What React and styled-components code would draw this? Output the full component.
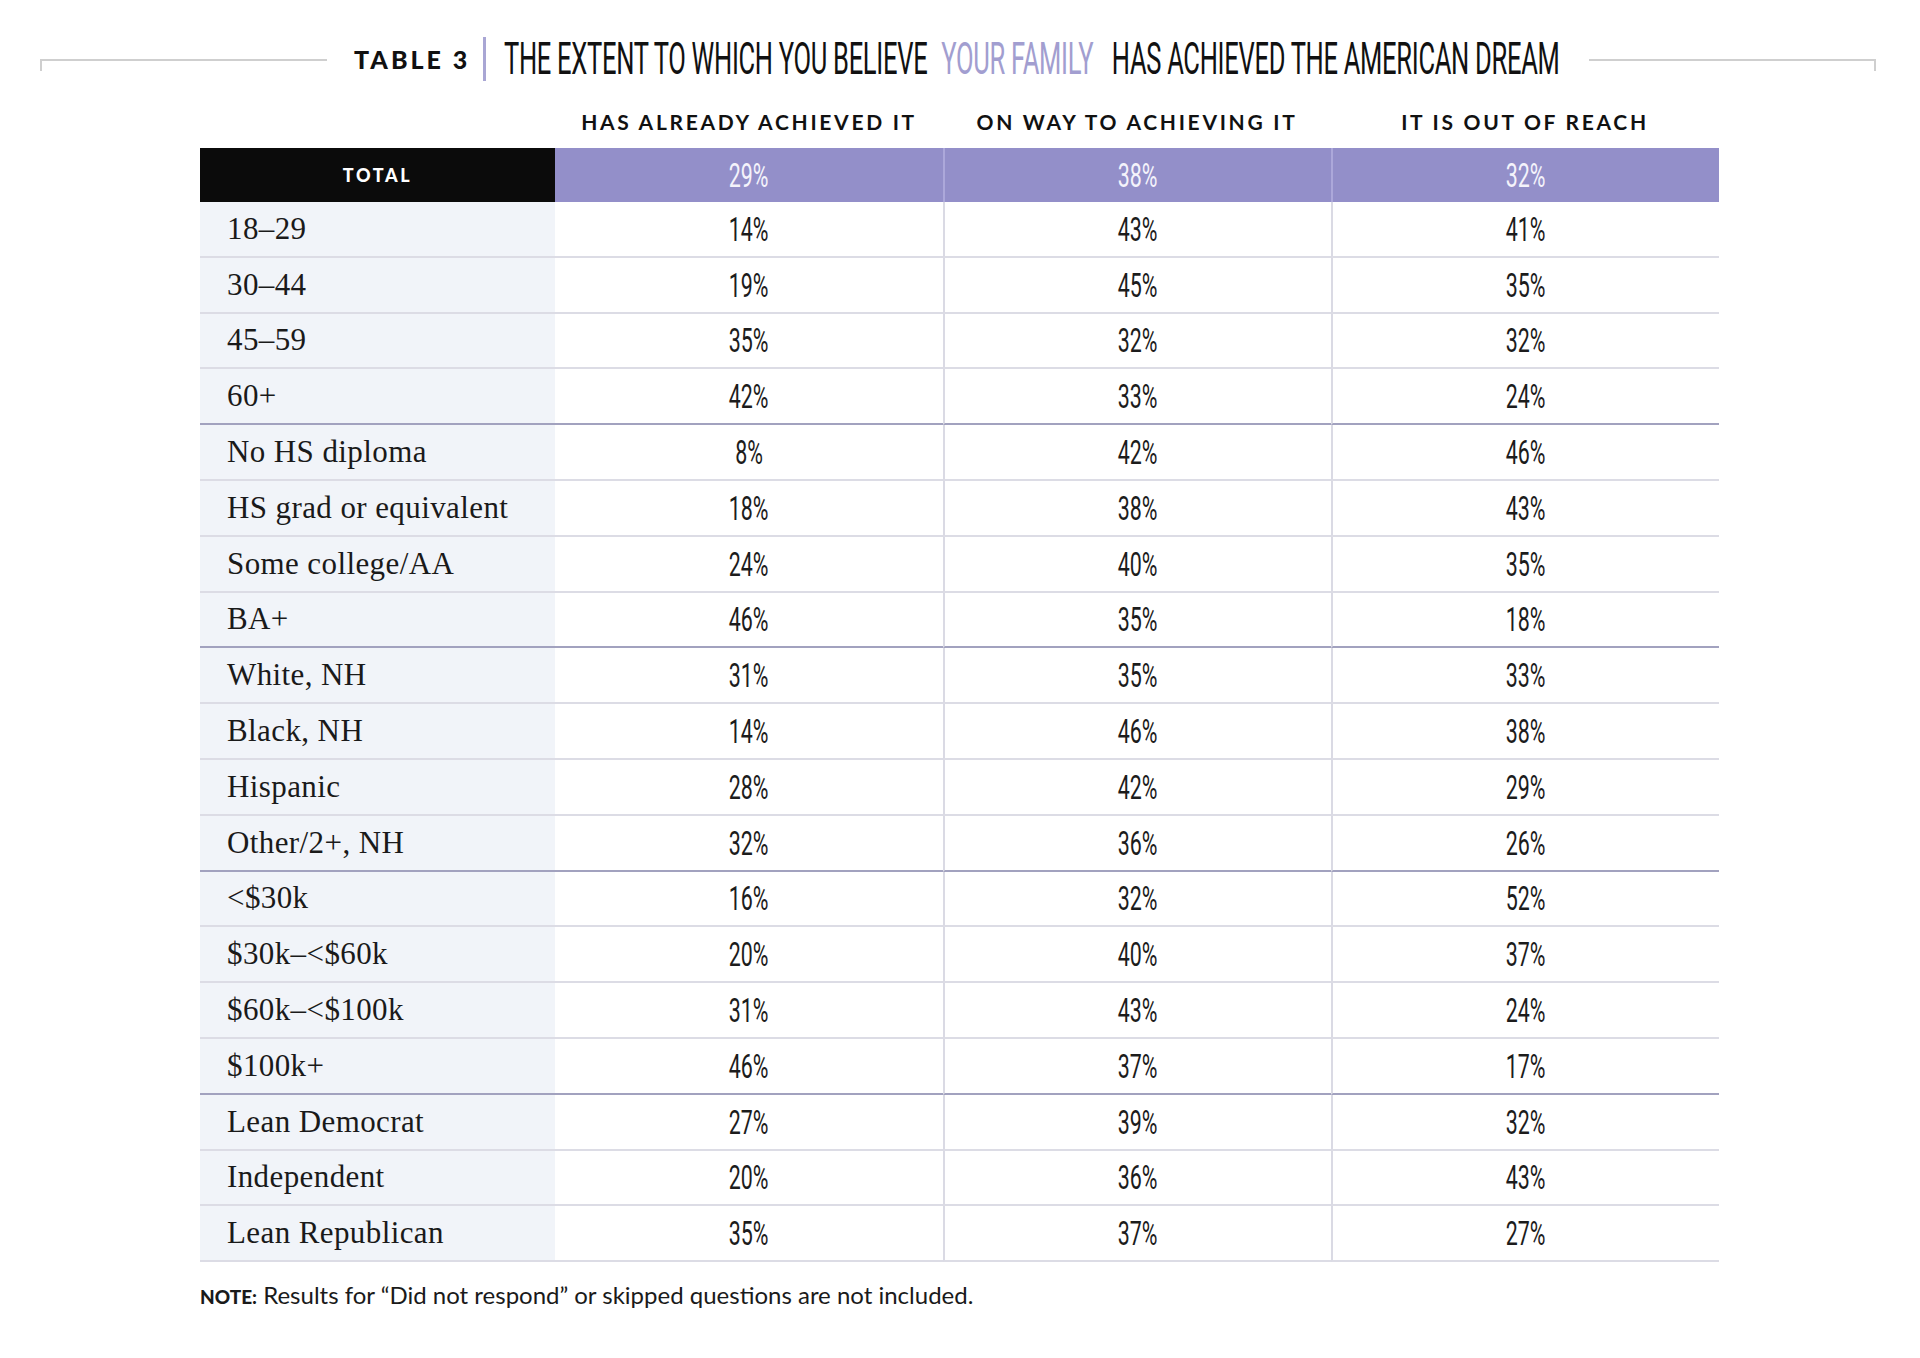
import React from 'react';
import styled, { createGlobalStyle } from 'styled-components';

const rows = [
  { label: '18–29', v: [14, 43, 41] },
  { label: '30–44', v: [19, 45, 35] },
  { label: '45–59', v: [35, 32, 32] },
  { label: '60+', v: [42, 33, 24], end: true },
  { label: 'No HS diploma', v: [8, 42, 46] },
  { label: 'HS grad or equivalent', v: [18, 38, 43] },
  { label: 'Some college/AA', v: [24, 40, 35] },
  { label: 'BA+', v: [46, 35, 18], end: true },
  { label: 'White, NH', v: [31, 35, 33] },
  { label: 'Black, NH', v: [14, 46, 38] },
  { label: 'Hispanic', v: [28, 42, 29] },
  { label: 'Other/2+, NH', v: [32, 36, 26], end: true },
  { label: '<$30k', v: [16, 32, 52] },
  { label: '$30k–<$60k', v: [20, 40, 37] },
  { label: '$60k–<$100k', v: [31, 43, 24] },
  { label: '$100k+', v: [46, 37, 17], end: true },
  { label: 'Lean Democrat', v: [27, 39, 32] },
  { label: 'Independent', v: [20, 36, 43] },
  { label: 'Lean Republican', v: [35, 37, 27] },
];

const columns = ['HAS ALREADY ACHIEVED IT', 'ON WAY TO ACHIEVING IT', 'IT IS OUT OF REACH'];
const totals = [29, 38, 32];

export default function App() {
  return (
    <>
      <GlobalStyle />
      <Page>
        <TitleRow>
          <Rule side="left" />
          <TableTag>TABLE 3</TableTag>
          <TagBar />
          <Heading>
            <Condensed>
              THE EXTENT TO WHICH YOU BELIEVE
              <Accent>YOUR FAMILY</Accent>
              HAS ACHIEVED THE AMERICAN DREAM
            </Condensed>
          </Heading>
          <Rule side="right" />
        </TitleRow>

        <Table>
          <ColHead />
          {columns.map((c) => (
            <ColHead key={c}>{c}</ColHead>
          ))}

          <TotalLabel>TOTAL</TotalLabel>
          {totals.map((t, i) => (
            <TotalCell key={i} divider={i > 0}>
              <Num>{t}%</Num>
            </TotalCell>
          ))}

          {rows.map((r) => (
            <React.Fragment key={r.label}>
              <LabelCell end={r.end}>{r.label}</LabelCell>
              {r.v.map((n, i) => (
                <Cell key={i} end={r.end} divider={i > 0}>
                  <Num>{n}%</Num>
                </Cell>
              ))}
            </React.Fragment>
          ))}
        </Table>

        <Note>
          <b>NOTE:</b> Results for “Did not respond” or skipped questions are not included.
        </Note>
      </Page>
    </>
  );
}

const GlobalStyle = createGlobalStyle`
  html, body {
    margin: 0;
    background: #ffffff;
    color: #1a1a1a;
    overflow: hidden;
  }
`;

const Page = styled.div`
  width: 100%;
  height: 1358px;
  padding: 37px 44px 0 40px;
  box-sizing: border-box;
  overflow: hidden;
`;

const TitleRow = styled.div`
  display: flex;
  align-items: center;
  height: 44px;
`;

const Rule = styled.div`
  flex: 1;
  height: 12px;
  margin-top: 12px;
  border-top: 2px solid #cfcfcf;
  ${(p) => (p.side === 'left' ? 'border-left: 2px solid #cfcfcf; margin-right: 27px;' : 'border-right: 2px solid #cfcfcf; margin-left: 27px;')}
  box-sizing: border-box;
`;

const TableTag = styled.div`
  font-family: Lato, 'Noto Sans', sans-serif;
  font-weight: 900;
  font-size: 25px;
  letter-spacing: 3px;
  color: #111;
  width: 114px;
  white-space: nowrap;
`;

const TagBar = styled.div`
  width: 3px;
  height: 44px;
  background: #a9a6d4;
  margin: 0 18px 0 15px;
`;

const Heading = styled.div`
  width: 1058px;
  overflow: hidden;
  white-space: nowrap;
`;

const Condensed = styled.span`
  display: inline-block;
  font-family: Roboto, 'Liberation Sans', sans-serif;
  font-weight: 400;
  font-size: 44px;
  letter-spacing: -0.5px;
  color: #111;
  transform: scaleX(0.58);
  transform-origin: left center;
`;

const Accent = styled.span`
  color: #a29ed0;
  margin: 0 32px 0 24px;
`;

const Table = styled.div`
  display: grid;
  grid-template-columns: 355px repeat(3, 388px);
  width: 1519px;
  margin: 0 0 0 160px;
`;

const ColHead = styled.div`
  height: 67px;
  display: flex;
  align-items: center;
  justify-content: center;
  padding-top: 13px;
  box-sizing: border-box;
  font-family: Lato, 'Noto Sans', sans-serif;
  font-weight: 700;
  font-size: 21px;
  letter-spacing: 2.7px;
  color: #111;
  white-space: nowrap;
`;

const TotalLabel = styled.div`
  height: 54px;
  background: #0b0b0b;
  color: #fff;
  display: flex;
  align-items: center;
  justify-content: center;
  font-family: Lato, 'Noto Sans', sans-serif;
  font-weight: 900;
  font-size: 18px;
  letter-spacing: 2.6px;
`;

const TotalCell = styled.div`
  height: 54px;
  background: #938fc9;
  color: #f4f3fb;
  display: flex;
  align-items: center;
  justify-content: center;
  box-sizing: border-box;
  border-left: ${(p) => (p.divider ? '2px solid #aca8da' : 'none')};
`;

const rowBorder = (p) => (p.end ? '2px solid #a2a2bf' : '2px solid #dcdce5');

const LabelCell = styled.div`
  height: 55.8px;
  box-sizing: border-box;
  background: #f1f4f9;
  border-bottom: ${rowBorder};
  display: flex;
  align-items: center;
  padding-left: 27px;
  font-family: 'Liberation Serif', 'DejaVu Serif', serif;
  font-size: 31px;
  letter-spacing: 0.4px;
  color: #1a1a1a;
`;

const Cell = styled.div`
  height: 55.8px;
  box-sizing: border-box;
  border-bottom: ${rowBorder};
  border-left: ${(p) => (p.divider ? '2px solid #dadae4' : 'none')};
  display: flex;
  align-items: center;
  justify-content: center;
  color: #1c1c1c;
`;

const Num = styled.span`
  display: inline-block;
  font-family: Roboto, 'Liberation Sans', sans-serif;
  font-size: 34px;
  font-weight: 400;
  transform: scaleX(0.63);
`;

const Note = styled.div`
  margin: 18px 0 0 160px;
  font-family: Lato, 'Noto Sans', sans-serif;
  font-size: 24px;
  color: #1a1a1a;

  b {
    font-weight: 900;
    font-size: 19px;
  }
`;
